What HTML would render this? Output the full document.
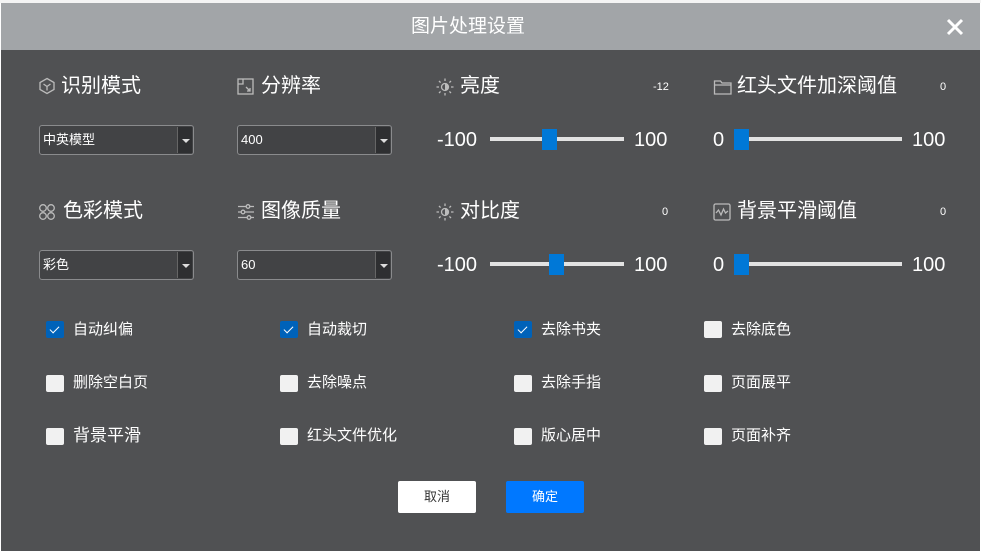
<!DOCTYPE html>
<html><head><meta charset="utf-8"><style>
*{margin:0;padding:0;box-sizing:border-box}
body{width:981px;height:553px;background:#fff;position:relative;overflow:hidden;font-family:"Liberation Sans","Noto Sans CJK SC",sans-serif;color:#fff}
.a{position:absolute;white-space:nowrap}
#hd{left:1px;top:3px;width:979px;height:47px;background:#a2a5a8}
#bd{left:1px;top:50px;width:979px;height:501px;background:#505153}
.lbl{font-size:20px;line-height:24px}
.val{font-size:11px;line-height:14px}
.sel{height:30px;width:155px;border:1px solid #8a8b8d;border-radius:3px;background:#424345;font-size:13px;line-height:28px;padding-left:3px}
.sel .btn{position:absolute;right:1px;top:1px;width:15px;height:26px;background:#2e2f31;border-left:1px solid #666}
.sel .btn:after{content:"";position:absolute;left:4px;top:12px;border-left:4px solid transparent;border-right:4px solid transparent;border-top:4px solid #ddd}
.num{font-size:20px;line-height:24px}
.trk{height:4px;background:#e2e2e2}
.hdl{width:15px;height:21px;background:#0078d7}
.cb{width:18px;height:17px;border-radius:2px;background:#f1f1f1}
.cb.on{background:#0062b9}
.cb.on:after{content:"";position:absolute;left:6px;top:3px;width:4px;height:8px;border-right:1.3px solid #fff;border-bottom:1.3px solid #fff;transform:rotate(45deg)}
.ct{font-size:15px;line-height:20px}
svg{position:absolute}
</style></head><body>
<div class="a" id="hd"></div>
<div class="a" id="bd"></div>
<div class="a" style="left:0;top:0;width:981px;height:3px;background:#f4f4f4"></div>
<div class="a" style="left:411px;top:15px;font-size:19px;line-height:24px">图片处理设置</div>
<svg style="left:946px;top:18px" width="18" height="18"><path d="M2 2L16 16M16 2L2 16" stroke="#fff" stroke-width="3"/></svg>

<!-- row1 -->
<svg style="left:38px;top:77px" width="18" height="18"><path d="M9 1.5L16 5.5V12.5L9 16.5L2 12.5V5.5Z M5.5 7L9 9.5L12.5 7M9 9.5V13.5" fill="none" stroke="#bbb" stroke-width="1.3"/></svg>
<div class="a lbl" style="left:61px;top:74px">识别模式</div>
<svg style="left:237px;top:78px" width="18" height="18"><rect x="1" y="1" width="15" height="15" fill="none" stroke="#bbb" stroke-width="1.3"/><path d="M1 6H6V1M9 9L13 13M13 10V13H10" fill="none" stroke="#bbb" stroke-width="1.3"/></svg>
<div class="a lbl" style="left:261px;top:74px">分辨率</div>
<svg style="left:436px;top:78px" width="18" height="18"><circle cx="9" cy="9" r="3.5" fill="none" stroke="#bbb" stroke-width="1.3"/><path d="M9 9m0-3.5a3.5 3.5 0 0 1 0 7z" fill="#bbb"/><path d="M9 0.5V3M9 15V17.5M0.5 9H3M15 9H17.5M3 3L4.6 4.6M13.4 13.4L15 15M3 15L4.6 13.4M13.4 4.6L15 3" stroke="#bbb" stroke-width="1.3"/></svg>
<div class="a lbl" style="left:460px;top:74px">亮度</div>
<div class="a val" style="left:653px;top:80px">-12</div>
<svg style="left:713px;top:78px" width="20" height="18"><path d="M1.5 3H7.5L9 5H18V16H1.5Z M1.5 7H18" fill="none" stroke="#bbb" stroke-width="1.3"/></svg>
<div class="a lbl" style="left:737px;top:74px">红头文件加深阈值</div>
<div class="a val" style="left:940px;top:80px">0</div>

<div class="a sel" style="left:39px;top:125px">中英模型<span class="btn"></span></div>
<div class="a sel" style="left:237px;top:125px">400<span class="btn"></span></div>
<div class="a num" style="left:437px;top:128px">-100</div>
<div class="a trk" style="left:490px;top:137px;width:134px"></div>
<div class="a hdl" style="left:542px;top:129px"></div>
<div class="a num" style="left:634px;top:128px">100</div>
<div class="a num" style="left:713px;top:128px">0</div>
<div class="a trk" style="left:734px;top:137px;width:168px"></div>
<div class="a hdl" style="left:734px;top:129px"></div>
<div class="a num" style="left:912px;top:128px">100</div>

<!-- row2 -->
<svg style="left:38px;top:203px" width="18" height="18"><g fill="none" stroke="#bbb" stroke-width="1.3"><circle cx="5" cy="5" r="3.3"/><circle cx="13" cy="5" r="3.3"/><circle cx="5" cy="13" r="3.3"/><circle cx="13" cy="13" r="3.3"/></g></svg>
<div class="a lbl" style="left:63px;top:199px">色彩模式</div>
<svg style="left:237px;top:203px" width="18" height="18"><g stroke="#bbb" stroke-width="1.3" fill="#505153"><path d="M1 3.5H17M1 9H17M1 14.5H17"/><circle cx="11" cy="3.5" r="1.8"/><circle cx="6" cy="9" r="1.8"/><circle cx="12" cy="14.5" r="1.8"/></g></svg>
<div class="a lbl" style="left:261px;top:199px">图像质量</div>
<svg style="left:436px;top:203px" width="18" height="18"><circle cx="9" cy="9" r="3.5" fill="none" stroke="#bbb" stroke-width="1.3"/><path d="M9 9m0-3.5a3.5 3.5 0 0 1 0 7z" fill="#bbb"/><path d="M9 0.5V3M9 15V17.5M0.5 9H3M15 9H17.5M3 3L4.6 4.6M13.4 13.4L15 15M3 15L4.6 13.4M13.4 4.6L15 3" stroke="#bbb" stroke-width="1.3"/></svg>
<div class="a lbl" style="left:460px;top:199px">对比度</div>
<div class="a val" style="left:662px;top:205px">0</div>
<svg style="left:713px;top:203px" width="18" height="18"><rect x="1" y="1" width="16" height="16" rx="1.5" fill="none" stroke="#bbb" stroke-width="1.3"/><path d="M3 10L5.5 7L8 12L10.5 6L12.5 10L15 8" fill="none" stroke="#bbb" stroke-width="1.3"/></svg>
<div class="a lbl" style="left:737px;top:199px">背景平滑阈值</div>
<div class="a val" style="left:940px;top:205px">0</div>

<div class="a sel" style="left:39px;top:250px">彩色<span class="btn"></span></div>
<div class="a sel" style="left:237px;top:250px">60<span class="btn"></span></div>
<div class="a num" style="left:437px;top:253px">-100</div>
<div class="a trk" style="left:490px;top:262px;width:134px"></div>
<div class="a hdl" style="left:549px;top:254px"></div>
<div class="a num" style="left:634px;top:253px">100</div>
<div class="a num" style="left:713px;top:253px">0</div>
<div class="a trk" style="left:734px;top:262px;width:168px"></div>
<div class="a hdl" style="left:734px;top:254px"></div>
<div class="a num" style="left:912px;top:253px">100</div>

<!-- checkboxes -->
<div class="a cb on" style="left:46px;top:321px"></div><div class="a ct" style="left:73px;top:320px">自动纠偏</div>
<div class="a cb on" style="left:280px;top:321px"></div><div class="a ct" style="left:307px;top:320px">自动裁切</div>
<div class="a cb on" style="left:514px;top:321px"></div><div class="a ct" style="left:541px;top:320px">去除书夹</div>
<div class="a cb" style="left:704px;top:321px"></div><div class="a ct" style="left:731px;top:320px">去除底色</div>

<div class="a cb" style="left:46px;top:375px"></div><div class="a ct" style="left:73px;top:373px">删除空白页</div>
<div class="a cb" style="left:280px;top:375px"></div><div class="a ct" style="left:307px;top:373px">去除噪点</div>
<div class="a cb" style="left:514px;top:375px"></div><div class="a ct" style="left:541px;top:373px">去除手指</div>
<div class="a cb" style="left:704px;top:375px"></div><div class="a ct" style="left:731px;top:373px">页面展平</div>

<div class="a cb" style="left:46px;top:428px"></div><div class="a ct" style="left:73px;top:425px;font-size:17px;line-height:22px">背景平滑</div>
<div class="a cb" style="left:280px;top:428px"></div><div class="a ct" style="left:307px;top:426px">红头文件优化</div>
<div class="a cb" style="left:514px;top:428px"></div><div class="a ct" style="left:541px;top:426px">版心居中</div>
<div class="a cb" style="left:704px;top:428px"></div><div class="a ct" style="left:731px;top:426px">页面补齐</div>

<div class="a" style="left:398px;top:481px;width:78px;height:32px;background:#fff;border-radius:2px;color:#333;font-size:13px;line-height:32px;text-align:center">取消</div>
<div class="a" style="left:506px;top:481px;width:78px;height:32px;background:#0078ff;border-radius:2px;color:#fff;font-size:13px;line-height:32px;text-align:center">确定</div>
</body></html>
